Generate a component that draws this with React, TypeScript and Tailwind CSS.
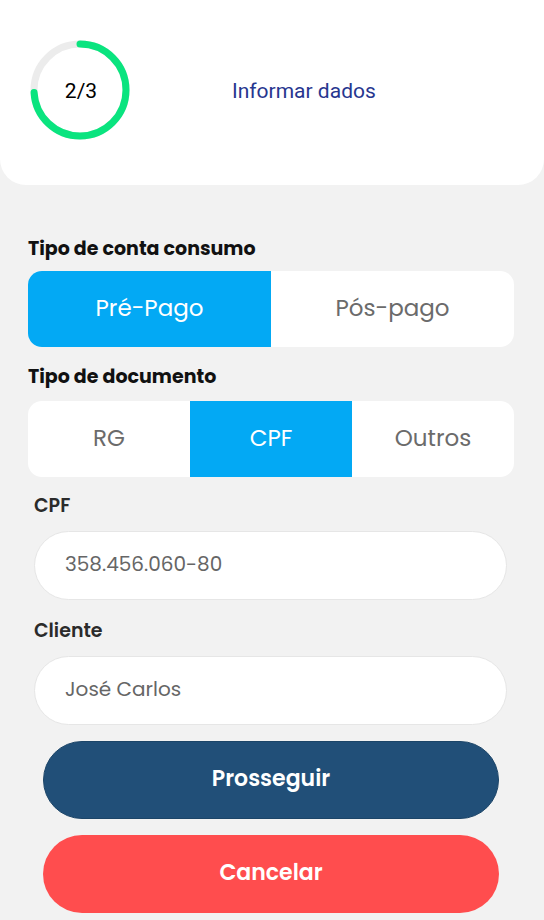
import React, { useState } from 'react';

const poppins = { fontFamily: '"Poppins", "Noto Sans", sans-serif' };

function ProgressRing() {
    const r = 46;
    const c = 2 * Math.PI * r;
    const filled = c * 0.74;
    return (
        <div className="relative w-[100px] h-[100px] shrink-0">
            <svg width="100" height="100" viewBox="0 0 100 100">
                <circle cx="50" cy="50" r={r} fill="none" stroke="#ececec" strokeWidth="7" />
                <circle
                    cx="50"
                    cy="50"
                    r={r}
                    fill="none"
                    stroke="#0ae47f"
                    strokeWidth="7"
                    strokeLinecap="round"
                    strokeDasharray={`${filled} ${c}`}
                    transform="rotate(-90 50 50)"
                />
            </svg>
            <span className="absolute inset-0 pt-[4px] pl-[2px] flex items-center justify-center text-[21px] text-black font-['Roboto',sans-serif]">2/3</span>
        </div>
    );
}

function Segmented({ options, active, onChange }: { options: string[]; active: number; onChange: (i: number) => void }) {
    return (
        <div className="flex h-[76px] bg-white rounded-[14px] overflow-hidden">
            {options.map((o, i) => (
                <button
                    key={o}
                    onClick={() => onChange(i)}
                    className={`flex-1 flex items-center justify-center pb-[2px] text-[23px] ${i === active ? 'bg-[#03a9f4] text-white' : 'text-[#6b6b6b]'}`}
                    style={poppins}
                >
                    {o}
                </button>
            ))}
        </div>
    );
}

export default function App() {
    const [conta, setConta] = useState(0);
    const [doc, setDoc] = useState(1);

    return (
        <div className="w-[544px] h-[920px] bg-[#f2f2f2] overflow-hidden">
            {/* Header card */}
            <div className="h-[185px] bg-white rounded-b-[26px] flex items-center pl-[30px] pb-[5px]">
                <ProgressRing />
                <span className="ml-[102px] mt-[4px] text-[21px] text-[#27368f] font-['Roboto',sans-serif]">Informar dados</span>
            </div>

            <div className="px-[28px] pt-[52px]" style={poppins}>
                <h3 className="text-[19px] font-bold text-[#111] leading-[24px] mb-[10px]">Tipo de conta consumo</h3>
                <div className="w-[486px]">
                    <Segmented options={['Pré-Pago', 'Pós-pago']} active={conta} onChange={setConta} />
                </div>

                <h3 className="text-[19px] font-bold text-[#111] leading-[24px] mt-[18px] mb-[12px]">Tipo de documento</h3>
                <div className="w-[486px]">
                    <Segmented options={['RG', 'CPF', 'Outros']} active={doc} onChange={setDoc} />
                </div>

                <div className="px-[6px] pr-[9px]">
                    <label className="block mt-[17px] text-[19px] font-semibold text-[#2b2b2b] leading-[24px]">CPF</label>
                    <div className="mt-[13px] h-[69px] bg-white rounded-full border border-[#e6e6e6] flex items-center px-[30px] pb-[4px] text-[20px] text-[#666]">
                        358.456.060-80
                    </div>

                    <label className="block mt-[19px] text-[19px] font-semibold text-[#2b2b2b] leading-[24px]">Cliente</label>
                    <div className="mt-[13px] h-[69px] bg-white rounded-full border border-[#e6e6e6] flex items-center px-[30px] pb-[4px] text-[20px] text-[#666]">
                        José Carlos
                    </div>
                </div>

                <div className="px-[15px] pr-[17px]">
                    <button className="mt-[16px] w-full h-[78px] rounded-full bg-[#214f78] border border-[#1c4568] text-white text-[22px] font-semibold pb-[3px]">
                        Prosseguir
                    </button>
                    <button className="mt-[16px] w-full h-[78px] rounded-full bg-[#ff4d4e] text-white text-[22px] font-semibold pb-[3px]">
                        Cancelar
                    </button>
                </div>
            </div>
        </div>
    );
}
